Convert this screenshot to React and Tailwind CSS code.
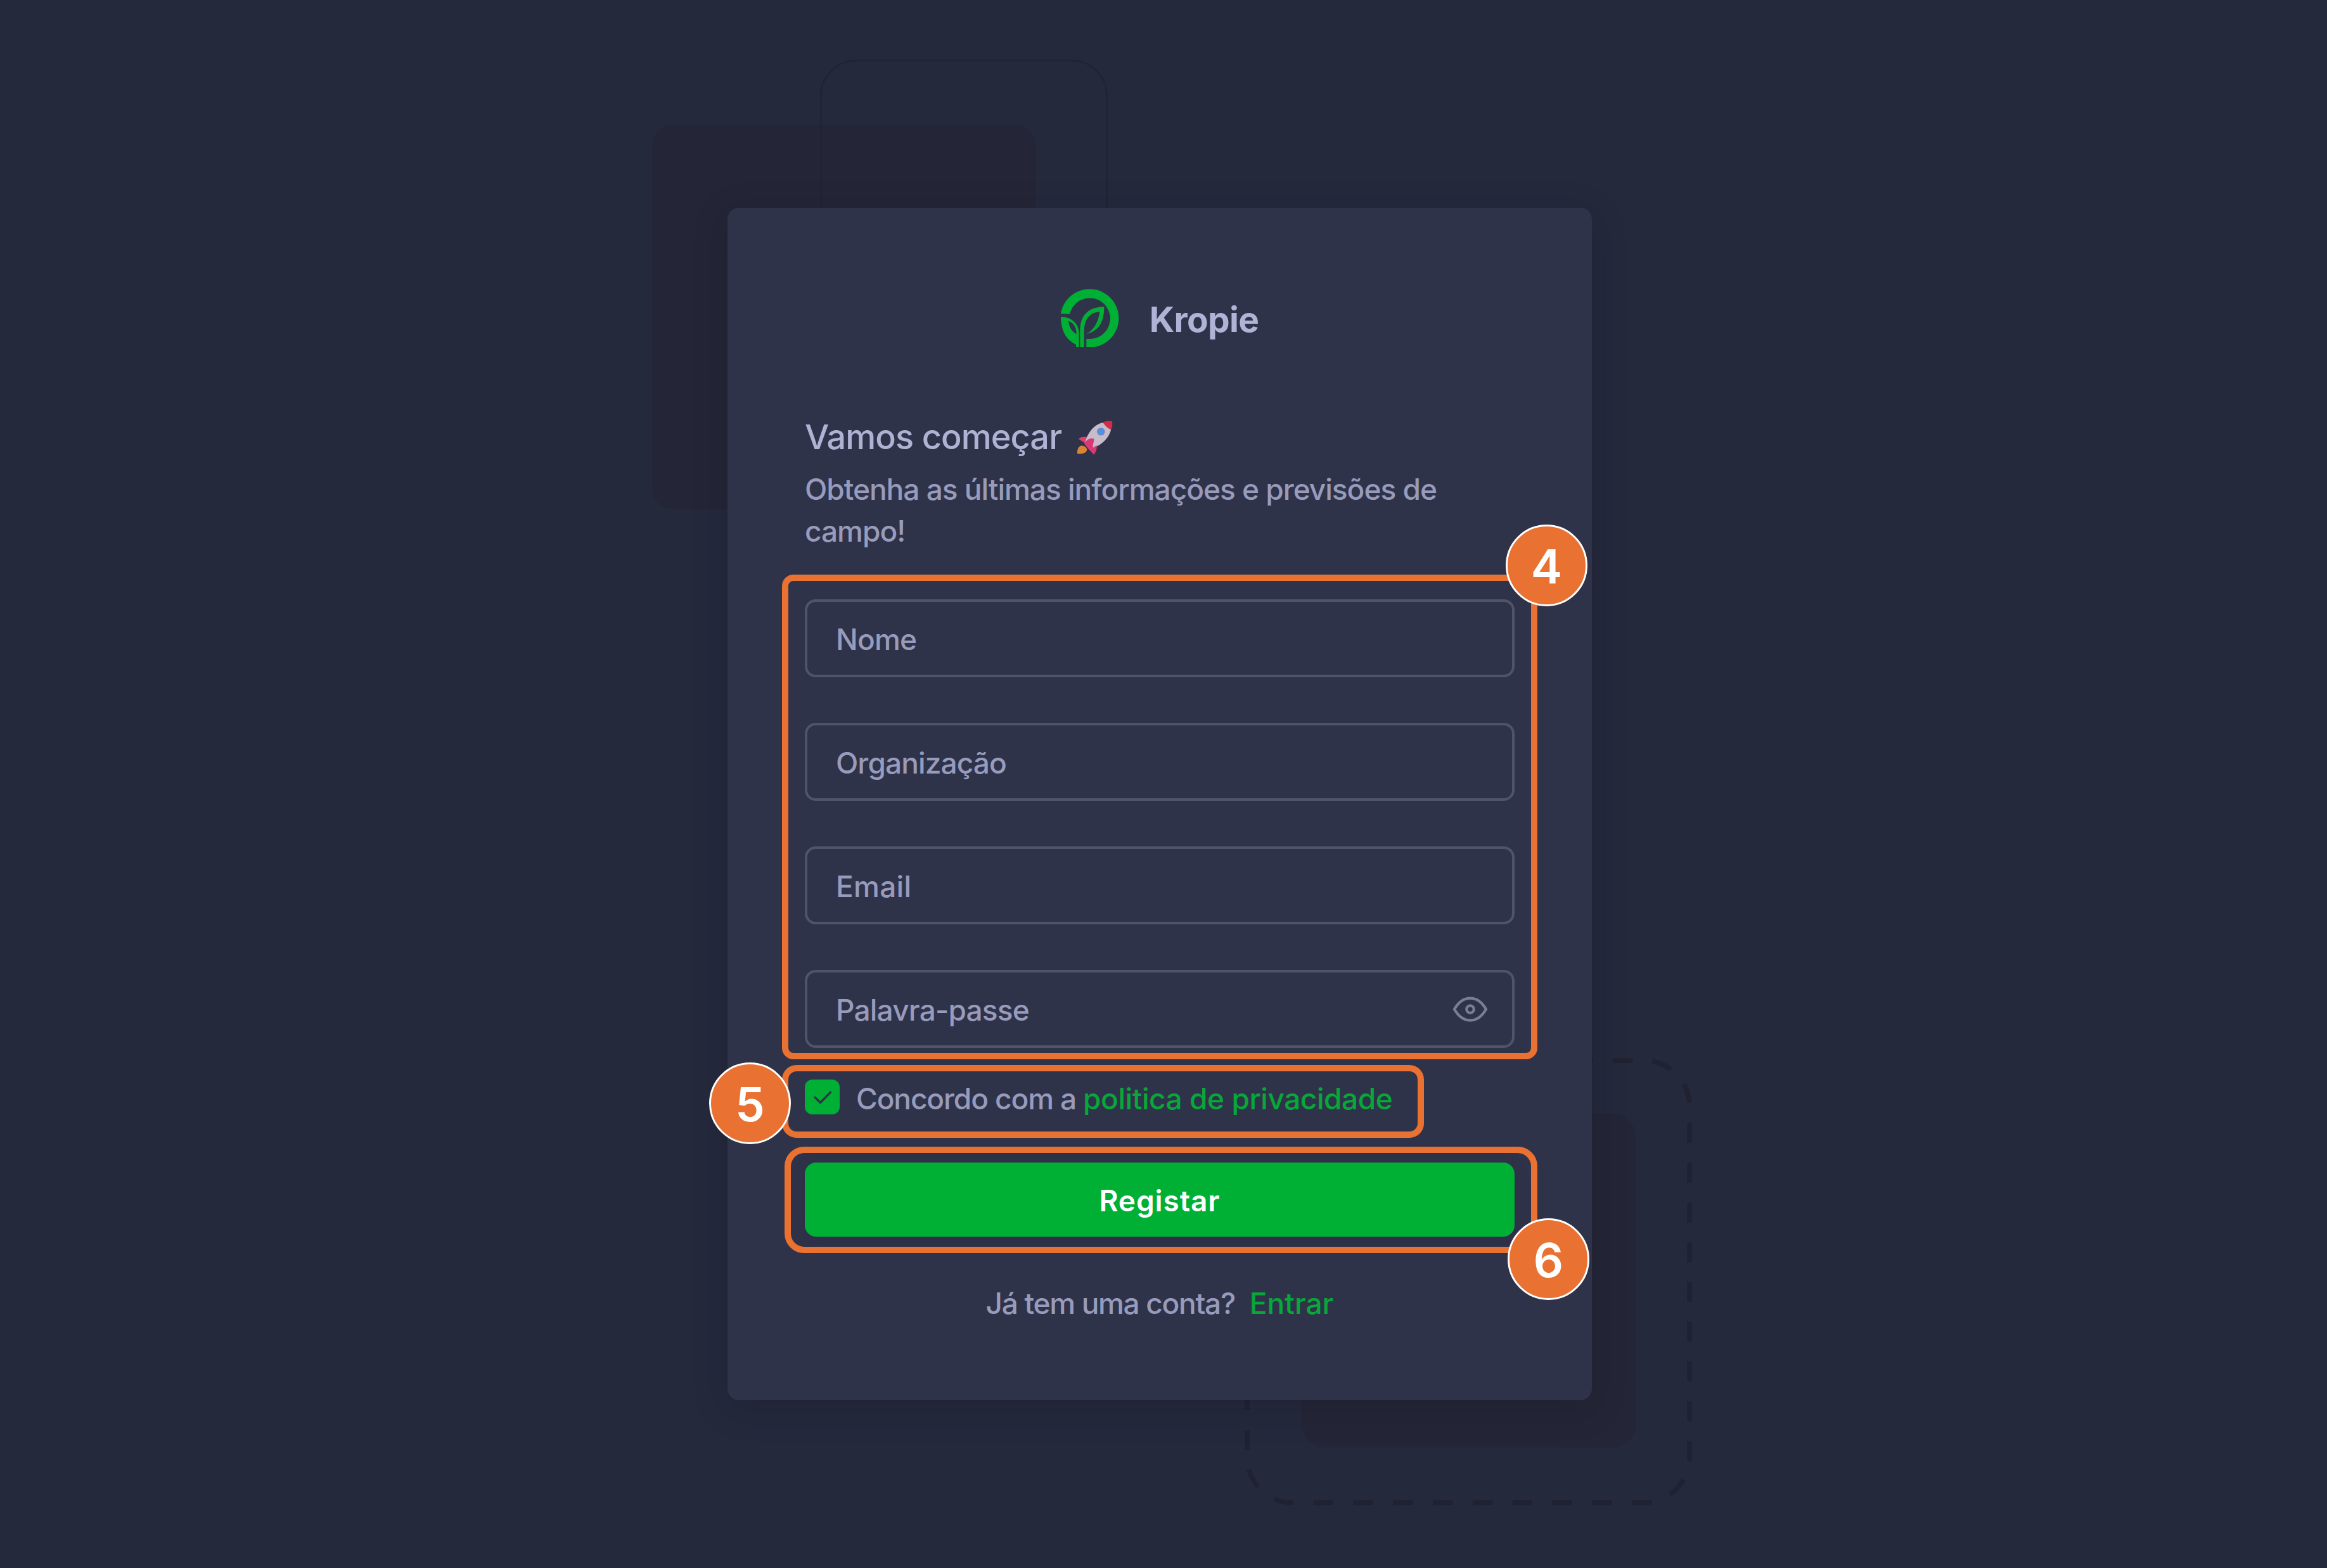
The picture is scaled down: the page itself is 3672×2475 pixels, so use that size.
import React from "react";

function KropieLogo() {
  return (
    <svg className="size-[92px] shrink-0" viewBox="0 0 276 276" fill="none" aria-hidden="true">
      <path
        d="M0 117A138 138 0 1 1 121 276V236A97 97 0 1 0 42 119Z"
        fill="#00b035"
      />
      <path
        fillRule="evenodd"
        d="M0 132C46 132 86 160 86 214V276H72V264C30 244 0 204 0 132ZM36 152C40 186 54 202 74 214C74 186 64 162 36 152Z"
        fill="#00b035"
      />
      <path
        fillRule="evenodd"
        d="M91 276V190C94 120 136 86 205 84C206 150 184 198 121 214C150 196 176 168 184 108C142 112 112 136 110 196V276Z"
        fill="#00b035"
      />
    </svg>
  );
}

function Rocket() {
  return (
    <svg className="h-[55px] w-[58px] shrink-0" viewBox="24 36 174 166" aria-hidden="true">
      <path d="M40 162C50 154 70 160 76 176C74 190 60 198 30 197C28 184 32 168 40 162Z" fill="#d98435" />
      <path d="M36 126C46 114 66 114 84 118L70 150C60 142 46 134 36 126Z" fill="#d9406f" />
      <path d="M152 48C120 54 84 82 66 142L100 170C150 156 182 116 190 82Z" fill="#c8bccb" />
      <path d="M152 48C164 40 180 40 195 42C198 56 196 70 190 82C176 76 162 64 152 48Z" fill="#d22e48" />
      <path d="M62 146C74 128 94 118 110 126C108 142 102 156 104 168C118 160 120 156 122 158C124 176 116 192 108 201C98 188 74 168 62 146Z" fill="#d93a76" />
      <circle cx="142" cy="91" r="19" fill="#7d86b8" />
      <circle cx="142" cy="91" r="14" fill="#4795e8" />
    </svg>
  );
}

function Eye() {
  return (
    <svg
      className="size-[60px] shrink-0"
      viewBox="0 0 24 24"
      fill="none"
      stroke="#7a7d96"
      strokeWidth="1.7"
      strokeLinecap="round"
      strokeLinejoin="round"
      aria-hidden="true"
    >
      <circle cx="12" cy="12" r="2.3" />
      <path d="M22 12c-2.667 4.667 -6 7 -10 7s-7.333 -2.333 -10 -7c2.667 -4.667 6 -7 10 -7s7.333 2.333 10 7" />
    </svg>
  );
}

function Field({ label, tracking, children }) {
  return (
    <div className="flex h-[123px] items-center justify-between rounded-[17px] border-4 border-[#505369] pr-[36px] pl-[45px]">
      <span className={`pt-[3px] text-[46px] leading-[66px] ${tracking}`}>{label}</span>
      {children}
    </div>
  );
}

function Badge({ n, place }) {
  return (
    <div
      className={`absolute flex size-[129px] items-center justify-center rounded-full border-[3px] border-white bg-[#e97132] pt-[3px] text-[74px] leading-none font-semibold text-white ${place}`}
    >
      {n}
    </div>
  );
}

function Backdrop() {
  return (
    <>
      <div className="absolute top-[197px] left-[1029px] size-[606px] rounded-[32px] bg-[#242637]" />
      <div className="absolute top-[94px] left-[1294px] size-[454px] rounded-[57px] border-[3px] border-[#212434]" />
      <div className="absolute top-[1757px] left-[2053px] size-[529px] rounded-[40px] bg-[#242637]" />
      <svg className="absolute top-[1670px] left-[1964px] size-[706px]" viewBox="1964 1670 706 706" fill="none" aria-hidden="true">
        <path
          d="M2419.3 1674H2594A72 72 0 0 1 2666 1746V2300A72 72 0 0 1 2594 2372H2040A72 72 0 0 1 1968 2300V1746A72 72 0 0 1 2040 1674H2400"
          stroke="#202232"
          strokeWidth="7.5"
          strokeDasharray="31.4 31.4"
        />
      </svg>
    </>
  );
}

export default function App() {
  return (
    <div className="relative flex h-[2475px] w-[3672px] items-start overflow-hidden bg-[#25293c] pt-[328px] pl-[1148px] font-['Inter',sans-serif] font-[450] whitespace-nowrap text-[#989bbb]">
      <Backdrop />

      <main className="relative flex h-[1882px] w-[1364px] flex-col rounded-[18px] bg-[#2f3349] px-[122px] pt-[128px] shadow-[0_12px_54px_rgba(19,17,32,0.22)]">
        <header className="flex h-[92px] items-center justify-center gap-[48px]">
          <KropieLogo />
          <span className="pt-1 text-[55px] leading-[72px] font-bold tracking-[-0.7px] text-[#afb3d6]">Kropie</span>
        </header>

        <h1 className="mt-[106px] flex h-[72px] items-center gap-[23px] text-[54px] leading-[72px] font-medium tracking-[-0.9px] text-[#afb3d3]">
          <span>Vamos começar</span>
          <Rocket />
        </h1>
        <p className="mt-[13px] text-[46px] leading-[66px] tracking-[-1px]">
          Obtenha as últimas informações e previsões de
          <br />
          campo!
        </p>

        <form className="mt-[75px] flex flex-col gap-[72px]">
          <Field label="Nome" tracking="tracking-[-0.8px]" />
          <Field label="Organização" tracking="tracking-[-0.9px]" />
          <Field label="Email" tracking="tracking-[0.3px]" />
          <Field label="Palavra-passe" tracking="tracking-[-0.8px]">
            <Eye />
          </Field>
        </form>

        <div className="mt-[50px] flex h-[55px] items-center text-[46px] leading-[66px]">
          <span className="mr-[26px] flex size-[55px] items-center justify-center rounded-[12px] bg-[#00b035]">
            <svg className="size-[34px]" viewBox="0 0 34 34" fill="none" stroke="#2f3349" strokeWidth="3.4" aria-hidden="true">
              <path d="M5 17L13.5 25.5L29.5 9" strokeLinecap="round" strokeLinejoin="round" />
            </svg>
          </span>
          <span className="mr-[11px] pt-1 tracking-[-1.1px]">Concordo com a</span>
          <a className="pt-1 tracking-[-0.45px] text-[#07a73a]">politica de privacidade</a>
        </div>

        <button
          type="button"
          className="mt-[76px] h-[117px] rounded-[18px] bg-[#00b035] pt-[3px] text-[46px] font-semibold tracking-[0.9px] text-white shadow-[0_6px_18px_rgba(47,43,72,0.9)]"
        >
          Registar
        </button>

        <p className="mt-[72px] flex justify-center gap-[23px] text-[46px] leading-[66px]">
          <span className="tracking-[-1.3px]">Já tem uma conta?</span>
          <a className="text-[#07a73a]">Entrar</a>
        </p>
      </main>

      <div className="absolute top-[907px] left-[1234px] h-[765px] w-[1192px] rounded-[18px] border-[10px] border-[#e97132]" />
      <div className="absolute top-[1681px] left-[1234px] h-[115px] w-[1013px] rounded-[23px] border-[10px] border-[#e97132]" />
      <div className="absolute top-[1810px] left-[1238px] h-[168px] w-[1188px] rounded-[31px] border-[10px] border-[#e97132]" />
      <Badge n="4" place="top-[828px] left-[2376px]" />
      <Badge n="5" place="top-[1677px] left-[1119px]" />
      <Badge n="6" place="top-[1923px] left-[2379px]" />
    </div>
  );
}
